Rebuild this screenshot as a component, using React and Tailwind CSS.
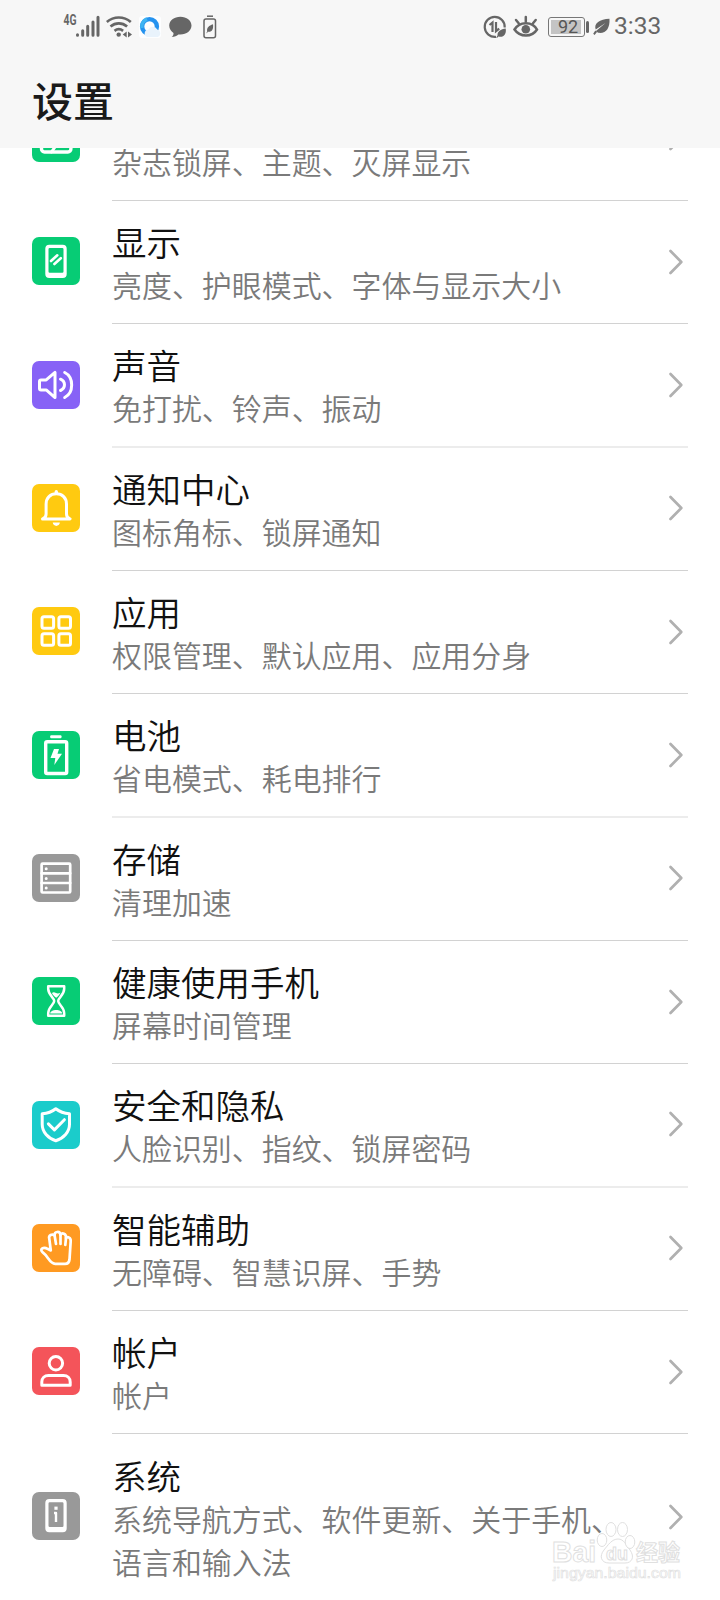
import clsx from 'clsx';

const Glyph = ({ children }) => (
  <svg
    viewBox="0 0 48 48"
    className="size-12"
    fill="none"
    stroke="white"
    strokeWidth="3"
    strokeLinecap="round"
    strokeLinejoin="round"
  >
    {children}
  </svg>
);

const icons = {
  wallpaper: (
    <>
      <rect x="9.5" y="9.3" width="29.4" height="28.7" rx="3" strokeWidth="3.4" />
      <path d="m19.5 38 4.5-6.5" />
    </>
  ),
  display: (
    <>
      <path
        d="M17.3 7.7h13.4a4 4 0 0 1 4 4V37a4 4 0 0 1-4 4H17.3a4 4 0 0 1-4-4V11.7a4 4 0 0 1 4-4ZM17.7 11a1.2 1.2 0 0 0-1.2 1.2v22.3a1.2 1.2 0 0 0 1.2 1.2h12.6a1.2 1.2 0 0 0 1.2-1.2V12.2a1.2 1.2 0 0 0-1.2-1.2Z"
        fill="white"
        fillRule="evenodd"
        stroke="none"
      />
      <path d="m19 24 6.3-5.7M22.4 27l6.4-5.8" strokeWidth="2.6" />
    </>
  ),
  sound: (
    <>
      <path d="M9 18.9h5.2L23 11.4v25.2L14.2 28.9H9a1.5 1.5 0 0 1-1.5-1.5v-7A1.5 1.5 0 0 1 9 18.9Z" />
      <path d="M28.5 18.2c5.3 2.3 5.3 9 0 11.3M32.7 11.5c9.3 4.7 9.3 20.3 0 25" />
    </>
  ),
  bell: (
    <>
      <path d="M10.5 34.9c2.7-.8 3.6-2.5 3.6-5V20c0-6 4.2-10.2 10.2-10.2S34.5 14 34.5 20v9.9c0 2.500.9 4.200 3.600 5Z" />
      <path d="M24.3 7.7v1.5" strokeWidth="3.4" />
      <path d="M20.7 38.6h7.2c-.6 4.4-6.6 4.4-7.2 0Z" fill="white" stroke="none" />
    </>
  ),
  apps: (
    <>
      <rect x="10" y="9.7" width="11.6" height="11.6" rx="2" />
      <rect x="26.9" y="9.7" width="11.6" height="11.6" rx="2" />
      <rect x="10" y="26.7" width="11.6" height="11.6" rx="2" />
      <rect x="26.9" y="26.7" width="11.6" height="11.6" rx="2" />
    </>
  ),
  battery: (
    <>
      <rect x="18.2" y="4.2" width="11.3" height="3" rx="1" fill="white" stroke="none" />
      <rect x="13.7" y="10.7" width="21" height="31.8" rx="1.5" strokeWidth="3.4" />
      <path d="M22 18h5l-1.5 4.7H30L22.3 34l1-7h-4.8Z" fill="white" stroke="none" />
    </>
  ),
  storage: (
    <>
      <rect x="9.6" y="9.7" width="28.6" height="28.8" rx="1" strokeWidth="2.7" />
      <path d="M9.6 19.3h28.6M9.6 29h28.6" strokeWidth="2.7" />
      <path d="M14.2 14.7h.01M14.2 24.4h.01M14.2 34h.01" />
    </>
  ),
  hourglass: (
    <>
      <path
        d="M16.2 9.2h16v2.6c0 6.5-6 8.7-6 12.2s6 5.8 6 12.3v2.4h-16v-2.4c0-6.5 6-8.8 6-12.3s-6-5.7-6-12.2Z"
        strokeWidth="2.5"
      />
      <path
        d="M20 16c1.5-1.5 2.8-.6 4 0 1.5.7 3 .4 4.3-.2-.8 2.2-2.3 3.5-4.1 5-1.9-1.4-3.5-2.8-4.2-4.8ZM18.2 36.5c0-2 2.9-3.5 6-3.5s6 1.5 6 3.5Z"
        fill="white"
        stroke="none"
      />
    </>
  ),
  shield: (
    <>
      <path d="M23.8 7.7c3.8 3 8.3 4.6 13.7 5v10.5c0 7.8-5.9 14-13.7 16.5C16 37.2 10.2 31 10.2 23.2V12.7c5.3-.4 9.8-2 13.6-5Z" />
      <path d="m16.4 22.9 6 6 10-10.2" />
    </>
  ),
  hand: (
    <>
      <path
        d="M18.8 26.500 15.500 24.800c-4-2.500-8 .5-5.300 3 2.800 2 4.300 4.200 6 6.700 2 3 3.500 5.300 7 5.300H33c3 0 4.200-1.500 4.500-4.300l1.200-18.300c.3-3.700-3-4.900-4.700-3.200.3-4.700-3.900-5.700-5.500-3.200-.6-4.200-6.300-3.500-5.900.7-2.400-2-6.400-.3-5.300 3.300Z"
        strokeWidth="2.700"
      />
      <path d="m22.600 11.500 1.400 8.500M28.500 10.800V20M34 14l-.7 6.800" strokeWidth="2.700" />
    </>
  ),
  user: (
    <>
      <circle cx="23.9" cy="16.3" r="6.7" />
      <path d="M9.8 38.3v-3.2c0-4 2.7-6.5 6.7-6.5h15c4 0 6.7 2.5 6.7 6.5v3.2Z" />
    </>
  ),
  system: (
    <>
      <path
        d="M17.3 7h13.4a4 4 0 0 1 4 4v25.3a4 4 0 0 1-4 4H17.3a4 4 0 0 1-4-4V11a4 4 0 0 1 4-4ZM17.7 10.3a1.2 1.2 0 0 0-1.2 1.2v22.3a1.2 1.2 0 0 0 1.2 1.2h12.6a1.2 1.2 0 0 0 1.2-1.2V11.5a1.2 1.2 0 0 0-1.2-1.2Z"
        fill="white"
        fillRule="evenodd"
        stroke="none"
      />
      <path d="M24 16.2h.01" strokeWidth="3.2" strokeLinecap="square" />
      <path d="M22 21h2v9" strokeWidth="2.4" strokeLinecap="butt" />
    </>
  ),
};

const items = [
  { icon: 'wallpaper', color: 'bg-[#07cc75]', title: '桌面和壁纸', text: '杂志锁屏、主题、灭屏显示' },
  { icon: 'display', color: 'bg-[#07cc75]', title: '显示', text: '亮度、护眼模式、字体与显示大小' },
  { icon: 'sound', color: 'bg-[#8762f6]', title: '声音', text: '免打扰、铃声、振动', soft: true },
  { icon: 'bell', color: 'bg-[#ffca10]', title: '通知中心', text: '图标角标、锁屏通知' },
  { icon: 'apps', color: 'bg-[#ffca10]', title: '应用', text: '权限管理、默认应用、应用分身' },
  { icon: 'battery', color: 'bg-[#07cc75]', title: '电池', text: '省电模式、耗电排行', soft: true },
  { icon: 'storage', color: 'bg-[#999999]', title: '存储', text: '清理加速' },
  { icon: 'hourglass', color: 'bg-[#07cc75]', title: '健康使用手机', text: '屏幕时间管理' },
  { icon: 'shield', color: 'bg-[#1bcccb]', title: '安全和隐私', text: '人脸识别、指纹、锁屏密码', soft: true },
  { icon: 'hand', color: 'bg-[#ff9a22]', title: '智能辅助', text: '无障碍、智慧识屏、手势' },
  { icon: 'user', color: 'bg-[#f4545a]', title: '帐户', text: '帐户' },
  { icon: 'system', color: 'bg-[#999999]', title: '系统', text: '系统导航方式、软件更新、关于手机、语言和输入法', tall: true },
];

const StatusBar = () => (
  <div className="flex h-[53px] items-center pl-[63px] text-[#666]">
    <svg viewBox="0 0 37 30" width="37" height="30" fill="currentColor">
      <text x="0.5" y="13" fontSize="14" fontWeight="700" textLength="13" lengthAdjust="spacingAndGlyphs" fontFamily="Roboto, sans-serif">4G</text>
      <path d="M14.5 23.2v-.4M19.7 23.2v-4.5M24.7 23.2v-9M30 23.2V10M35 23.2V5.2" stroke="currentColor" strokeWidth="3" strokeLinecap="round" />
    </svg>
    <svg viewBox="0 0 28 26" width="28" height="26" className="ml-1.5" fill="none" stroke="currentColor" strokeWidth="2.7">
      <path d="M.8 8c7-6 17-6 24 0M4.5 12.5c5-4.2 11.6-4.2 16.6 0M8.5 16.8c2.8-2.1 5.8-2.1 8.6 0" />
      <circle cx="12.7" cy="20.6" r="2.2" fill="currentColor" stroke="none" />
      <path d="m16.7 20.6 4-3v6ZM26 20.6l-4-3v6Z" fill="currentColor" stroke="none" />
    </svg>
    <svg viewBox="0 0 24 24" width="24" height="24" className="ml-1">
      <rect x="1" y="1" width="22" height="22" rx="3" fill="#fdfeff" />
      <circle cx="11.5" cy="11.5" r="7.4" fill="none" stroke="#2492ef" strokeWidth="4.4" />
      <path d="M4 13a8 8 0 0 1 5-9" fill="none" stroke="#3fb4f2" strokeWidth="3.5" />
      <path d="M9 22a3.8 3.8 0 0 1 1.3-7.3 5 5 0 0 1 9-.3A4 4 0 0 1 19.7 22Z" fill="#e9f3fc" />
    </svg>
    <svg viewBox="0 0 23 22" width="23" height="22" className="ml-[7px]" fill="currentColor">
      <path d="M11.4.8C17.6.8 22.5 4.6 22.5 9.6s-4.9 9-11.1 9l-2-.1c-1.7 1.5-3.8 2.5-6.7 2.6 1.3-1 1.9-2.4 1.8-4.1C2 15.3.2 12.9.2 9.6.2 4.6 5.2.8 11.4.8Z" />
    </svg>
    <svg viewBox="0 0 14 24" width="14" height="24" className="ml-[11px]" fill="none" stroke="currentColor" strokeWidth="1.5">
      <path d="M4 1.2h6" />
      <rect x="1" y="4" width="11.5" height="18.8" rx="2" />
      <path d="M10 9.3c.6 5-1 8-5 7.5l-1.3 1.5-.3-.4.8-1.5c-.7-3.6 1.8-5.8 5.8-7.1Z" fill="currentColor" stroke="none" />
    </svg>
    <svg viewBox="0 0 24 24" width="24" height="24" className="ml-[266px]" fill="none" stroke="currentColor" strokeWidth="2.2">
      <path d="M21.7 12.5A10 10 0 1 0 13 21.8" />
      <path d="m6.5 10 3-2.5V17M13 7v9.2l3.2-2.5" />
      <path d="M22.7 13.5c1 6-2.3 9.3-7.3 8l-1.4 1.5-.7-.6 1.2-1.9c-.2-4 3.2-6.2 8.2-7Z" fill="currentColor" stroke="none" />
    </svg>
    <svg viewBox="0 0 26 24" width="26" height="24" className="ml-1.5" fill="none" stroke="currentColor" strokeWidth="2.5" strokeLinecap="round">
      <path d="M1.5 14.5C6.5 6 19.5 6 24 14.5c-5 8-17 8-22.5 0Z" />
      <circle cx="12.8" cy="14.2" r="4.3" fill="currentColor" stroke="none" />
      <path d="M12.8 6.5V2M5.7 8.2 3 5M20 8.2 22.7 5" />
    </svg>
    <div className="ml-[9px] flex items-center">
      <div className="flex h-5 w-[37px] rounded-[3px] border border-[#777] p-0.5">
        <div className="flex w-[30px] items-center justify-center bg-[#c4c4c4] pl-1 font-[Roboto,sans-serif] text-[18px] leading-none text-[#555]">
          92
        </div>
      </div>
      <div className="ml-px h-3 w-[3px] rounded-full bg-[#666]" />
    </div>
    <svg viewBox="0 0 17 18" width="17" height="18" className="ml-1" fill="currentColor">
      <path d="M16.5.8c.5 9.7-3.500 15.200-11.500 14L3 12.900 12.500 5 2.700 11.600C.5 5.500 6.700 1.300 16.500.8ZM2.300 12.500l1.700 1.600L1.600 17 .2 15.800Z" />
    </svg>
    <span className="ml-1 font-[Roboto,sans-serif] text-[24.5px] leading-none">3:33</span>
  </div>
);

const Chevron = () => (
  <svg
    viewBox="0 0 16 28"
    className="mr-1 h-7 w-4 shrink-0"
    fill="none"
    stroke="#b0b0b0"
    strokeWidth="2.7"
    strokeLinecap="round"
    strokeLinejoin="round"
  >
    <path d="M2.5 3 13.3 14 2.5 25" />
  </svg>
);

const Row = ({ item }) => (
  <li className={clsx('flex px-8', item.tall ? 'h-[167px]' : 'h-[123.333px]')}>
    <div className="flex w-20 shrink-0 items-center pb-[2.7px]">
      <div className={clsx('size-12 rounded-[7px]', item.color)}>
        <Glyph>{icons[item.icon]}</Glyph>
      </div>
    </div>
    <div className="flex flex-1 flex-col">
      <div className="flex flex-1 items-center justify-between pb-px">
        <div className="w-[520px] pt-[3px] font-[350]">
          <h2 className="text-[34.5px] leading-[43px] text-[#111]">{item.title}</h2>
          <p className="text-[29.95px] leading-[43.5px] text-[#7a7a7a]">{item.text}</p>
        </div>
        <Chevron />
      </div>
      {!item.tall && <div className={item.soft ? 'h-0.5 bg-[#ececec]' : 'h-px bg-[#d2d2d2]'} />}
    </div>
  </li>
);

const Watermark = () => (
  <svg
    viewBox="0 0 140 70"
    className="absolute right-[33px] bottom-[13px] h-[70px] w-[140px]"
    fill="white"
    fillOpacity="0.85"
    stroke="#e0e0e0"
    strokeWidth="1"
  >
    <g fontFamily="'Liberation Sans', 'Noto Sans CJK SC', sans-serif" fontWeight="700">
      <text x="5" y="45" fontSize="30" textLength="44" lengthAdjust="spacingAndGlyphs">Bai</text>
      <path d="M71 22c6 0 8 6 12 11 5 7 2 13-5 13H62c-8 0-10-7-5-13 4-5 8-11 14-11Z" />
      <ellipse cx="55" cy="23" rx="4.8" ry="6.5" />
      <ellipse cx="64" cy="12.5" rx="5" ry="7" />
      <ellipse cx="75.5" cy="12.5" rx="5" ry="7" />
      <ellipse cx="83" cy="25" rx="4.8" ry="6.5" />
      <text x="59" y="43" fontSize="19" textLength="22" lengthAdjust="spacingAndGlyphs">du</text>
      <text x="89" y="43" fontSize="22" textLength="44" fontFamily="'Noto Sans CJK SC', sans-serif">经验</text>
      <text x="6" y="61" fontSize="14" textLength="128" lengthAdjust="spacingAndGlyphs" fontWeight="400" strokeWidth="0.6">jingyan.baidu.com</text>
    </g>
  </svg>
);

const App = () => {
  return (
    <div className="relative h-[1600px] w-[720px] overflow-hidden bg-white font-['Noto_Sans_CJK_SC',sans-serif]">
      <header className="h-[148px] bg-[#f7f7f7]">
        <StatusBar />
        <h1 className="pl-8 text-[41px] leading-[93px] font-medium text-[#1a1a1a]">设置</h1>
      </header>
      <main className="h-[1452px] overflow-hidden">
        {/* scrolled so that the first row is cut by the header */}
        <ul className="-mt-[70.3px]">
          {items.map((item) => (
            <Row key={item.icon} item={item} />
          ))}
        </ul>
      </main>
      <Watermark />
    </div>
  );
};

export default App;
